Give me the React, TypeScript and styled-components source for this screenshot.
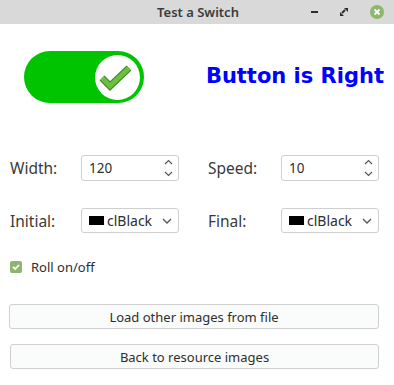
import React, { FC, useState } from "react";
import styled, { createGlobalStyle } from "styled-components";

const GlobalStyle = createGlobalStyle`
  html, body { margin: 0; padding: 0; background: #ffffff; }
  body { font-family: "Noto Sans", "Open Sans", sans-serif; }
`;

const SpinArrows: FC = () => (
  <Arrows>
    <svg width="9" height="6" viewBox="0 0 9 6">
      <path d="M1 5 L4.5 1.5 L8 5" fill="none" stroke="#555" strokeWidth="1.2" />
    </svg>
    <svg width="9" height="6" viewBox="0 0 9 6">
      <path d="M1 1 L4.5 4.5 L8 1" fill="none" stroke="#555" strokeWidth="1.2" />
    </svg>
  </Arrows>
);

const ColorCombo: FC<{ value: string }> = ({ value }) => (
  <Combo>
    <Swatch />
    <ComboText>{value}</ComboText>
    <DropArrow>
      <svg width="10" height="6" viewBox="0 0 10 6">
        <path d="M1 1 L5 5 L9 1" fill="none" stroke="#555" strokeWidth="1.3" />
      </svg>
    </DropArrow>
  </Combo>
);

export const App: FC = () => {
  const [roll, setRoll] = useState(true);

  return (
    <Window>
      <GlobalStyle />
      <TitleBar>
        <Title>Test a Switch</Title>
        <WindowButtons>
          <MinimizeIcon />
          <MaximizeIcon>
            <svg width="8" height="8" viewBox="0 0 8 8">
              <path d="M0 4 L0 8 L4 8 Z" fill="#2e2e2e" />
              <path d="M4 0 L8 0 L8 4 Z" fill="#2e2e2e" />
              <path d="M2 5 L5 2" stroke="#2e2e2e" strokeWidth="2" />
            </svg>
          </MaximizeIcon>
          <CloseIcon>
            <svg width="14" height="14" viewBox="0 0 14 14">
              <circle cx="7" cy="7" r="7" fill="#8cb86a" />
              <path d="M4.5 4.5 L9.5 9.5 M9.5 4.5 L4.5 9.5" stroke="#fff" strokeWidth="1.8" />
            </svg>
          </CloseIcon>
        </WindowButtons>
      </TitleBar>
      <Content>
        <TopRow>
          <Switch>
            <Knob>
              <svg width="45" height="45" viewBox="0 0 45 45">
                <path
                  d="M7 23 L15 31 L34 13"
                  fill="none"
                  stroke="#3e8a24"
                  strokeWidth="7"
                  strokeLinejoin="miter"
                />
                <path
                  d="M7 23 L15 31 L34 13"
                  fill="none"
                  stroke="#6cc040"
                  strokeWidth="4.6"
                  strokeLinejoin="miter"
                />
              </svg>
            </Knob>
          </Switch>
          <StateText>Button is Right</StateText>
        </TopRow>
        <FieldGrid>
          <Label>Width:</Label>
          <SpinBox>
            <span>120</span>
            <SpinArrows />
          </SpinBox>
          <Label $right>Speed:</Label>
          <SpinBox>
            <span>10</span>
            <SpinArrows />
          </SpinBox>
          <Label>Initial:</Label>
          <ColorCombo value="clBlack" />
          <Label $right>Final:</Label>
          <ColorCombo value="clBlack" />
        </FieldGrid>
        <CheckRow onClick={() => setRoll(!roll)}>
          <CheckBox $checked={roll}>
            {roll && (
              <svg width="10" height="10" viewBox="0 0 10 10">
                <path d="M2 5 L4.2 7 L8 3" fill="none" stroke="#fff" strokeWidth="1.8" />
              </svg>
            )}
          </CheckBox>
          <CheckLabel>Roll on/off</CheckLabel>
        </CheckRow>
        <ButtonStack>
          <PushButton>Load other images from file</PushButton>
          <PushButton $inset>Back to resource images</PushButton>
        </ButtonStack>
      </Content>
    </Window>
  );
};

const Window = styled.div`
  width: 394px;
  height: 385px;
  background: #ffffff;
  display: flex;
  flex-direction: column;
  overflow: hidden;
`;

const TitleBar = styled.div`
  height: 24px;
  background: #d9d9d9;
  position: relative;
  display: flex;
  align-items: center;
  justify-content: center;
`;

const Title = styled.div`
  font-size: 13px;
  font-weight: 600;
  color: #3c3c3c;
  margin-left: 2px;
`;

const WindowButtons = styled.div`
  position: absolute;
  right: 10px;
  top: 0;
  height: 24px;
  display: flex;
  align-items: center;
`;

const MinimizeIcon = styled.div`
  width: 7px;
  height: 2px;
  background: #2e2e2e;
  margin-right: 22px;
`;

const MaximizeIcon = styled.div`
  width: 8px;
  height: 8px;
  display: flex;
  margin-right: 22px;
`;

const CloseIcon = styled.div`
  width: 14px;
  height: 14px;
  display: flex;
`;

const Content = styled.div`
  display: flex;
  flex-direction: column;
  padding: 0 15px 0 9px;
`;

const TopRow = styled.div`
  display: flex;
  align-items: center;
  justify-content: space-between;
  padding: 27px 0 0 15px;
  height: 52px;
`;

const Switch = styled.div`
  width: 120px;
  height: 52px;
  border-radius: 26px;
  background: #00c400;
  display: flex;
  align-items: center;
  justify-content: flex-end;
  padding-right: 4px;
  box-sizing: border-box;
`;

const Knob = styled.div`
  width: 45px;
  height: 45px;
  border-radius: 50%;
  background: #ffffff;
  display: flex;
`;

const StateText = styled.div`
  font-family: "DejaVu Sans", sans-serif;
  font-weight: bold;
  font-size: 21px;
  color: #0000ff;
  margin-right: -5px;
  margin-top: -2px;
`;

const FieldGrid = styled.div`
  display: grid;
  grid-template-columns: 71px 98px 102px 98px;
  row-gap: 27px;
  align-items: center;
  margin-top: 52px;
  padding-left: 1px;
`;

const Label = styled.div<{ $right?: boolean }>`
  font-size: 15.5px;
  color: #3a3a3a;
  margin-left: ${(p) => (p.$right ? "29px" : "0")};
`;

const SpinBox = styled.div`
  height: 26px;
  box-sizing: border-box;
  border: 1px solid #cfcfcf;
  border-radius: 3px;
  background: #ffffff;
  display: flex;
  align-items: center;
  justify-content: space-between;
  padding: 0 5px 0 7px;
  font-size: 13.5px;
  color: #2e2e2e;
`;

const Arrows = styled.div`
  display: flex;
  flex-direction: column;
  align-items: center;
  gap: 6px;
`;

const Combo = styled.div`
  height: 25px;
  box-sizing: border-box;
  border: 1px solid #cfcfcf;
  border-radius: 3px;
  background: #ffffff;
  display: flex;
  align-items: center;
  padding: 0 6px 0 7px;
  font-size: 14px;
  color: #2e2e2e;
`;

const Swatch = styled.div`
  width: 15px;
  height: 9px;
  background: #000000;
  margin-right: 3px;
`;

const ComboText = styled.span`
  flex: 1;
`;

const DropArrow = styled.span`
  display: flex;
`;

const CheckRow = styled.div`
  display: flex;
  align-items: center;
  gap: 9px;
  margin-top: 25px;
  padding-left: 1px;
  cursor: pointer;
`;

const CheckBox = styled.div<{ $checked: boolean }>`
  width: 12px;
  height: 12px;
  border-radius: 2px;
  background: ${(p) => (p.$checked ? "#8fb46f" : "#ffffff")};
  border: ${(p) => (p.$checked ? "none" : "1px solid #aaa")};
  display: flex;
  align-items: center;
  justify-content: center;
`;

const CheckLabel = styled.span`
  font-size: 13px;
  color: #2e2e2e;
`;

const ButtonStack = styled.div`
  display: flex;
  flex-direction: column;
  gap: 15px;
  margin-top: 28px;
`;

const PushButton = styled.button<{ $inset?: boolean }>`
  height: 25px;
  width: ${(p) => (p.$inset ? "369px" : "370px")};
  margin-left: ${(p) => (p.$inset ? "1px" : "0")};
  box-sizing: border-box;
  border: 1px solid #d0d0d0;
  border-radius: 3px;
  background: #fafbfb;
  font-family: "Noto Sans", sans-serif;
  font-size: 13px;
  color: #2e2e2e;
  padding: 0;
`;

export default App;
